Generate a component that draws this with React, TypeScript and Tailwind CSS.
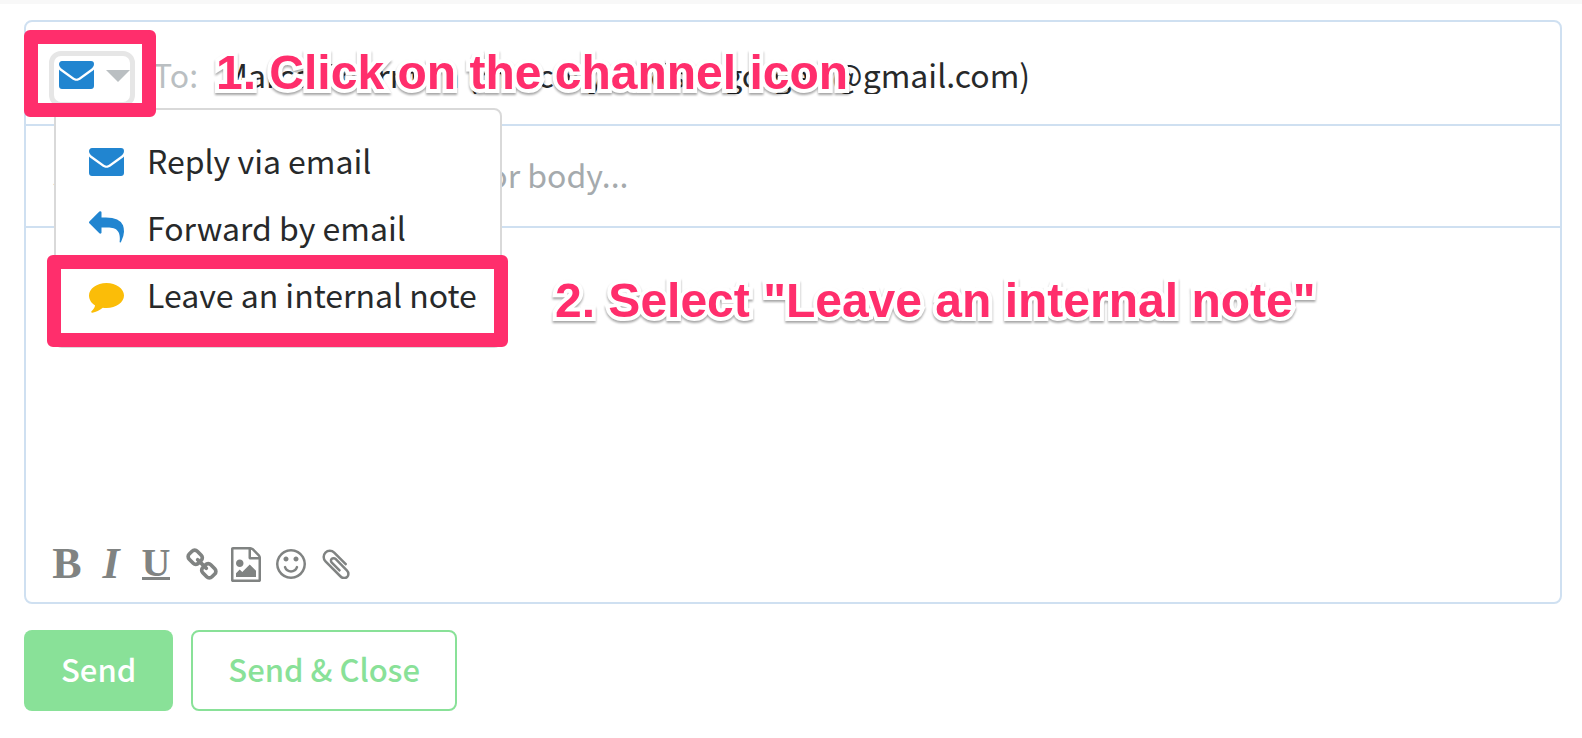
import type { ReactNode } from "react";

const sans = "font-['Noto_Sans_CJK_SC','Open_Sans',sans-serif]";

function MailIcon() {
  return (
    <svg viewBox="0 -4 35 32" className="h-8 w-[35px] shrink-0" fill="#2185d0" aria-hidden="true">
      <path d="M3 0h29c2 0 3 1.300 3 3 0 2-1.200 3.800-3 5L21 16c-1.500 1.100-2.500 1.700-3.500 1.700S15.500 17.100 14 16L3 8C1.300 6.800 0 5 0 3.300 0 1.400 1.200 0 3 0z" />
      <path d="M0 8.500c.6.6 1.200 1.200 2 1.700l10.500 7.500c1.900 1.400 3.400 2.100 5 2.100s3.100-.7 5-2.100L33 10.200c.8-.5 1.400-1.100 2-1.700V25c0 1.700-1.300 3-3 3H3c-1.700 0-3-1.300-3-3z" />
    </svg>
  );
}

function ReplyIcon() {
  return (
    <svg viewBox="0 -100 1792 1764" className="h-[35px] w-[35px] shrink-0" fill="#2185d0" aria-hidden="true">
      <path d="M1792 1056q0 166-127 451-3 7-10.500 24t-13.500 30-13 22q-12 17-28 17-15 0-23.500-10t-8.500-25q0-9 2.500-26.500t2.500-23.500q5-68 5-123 0-101-17.500-181t-48.500-138.500-80-101-105.500-69.500-133-42.500-154-21.500-175.500-6h-224v256q0 26-19 45t-45 19-45-19l-512-512q-19-19-19-45t19-45l512-512q19-19 45-19t45 19 19 45v256h224q713 0 875 403 53 134 53 333z" />
    </svg>
  );
}

function NoteIcon() {
  return (
    <svg viewBox="0 -8 35 38" className="h-[38px] w-[35px] shrink-0" fill="#fbbd08" aria-hidden="true">
      <path d="M17.500 0C27.200 0 35 5.600 35 12.500S27.200 25 17.500 25c-1.300 0-2.500-.1-3.700-.3-3.200 2.700-6.900 4.300-10.400 5-.6.100-1.100-.1-1.200-.6-.1-.4.200-.7.600-1.100 1.600-1.600 2.700-2.900 3.300-5.500C2.400 20.200 0 16.600 0 12.500 0 5.600 7.800 0 17.500 0z" />
    </svg>
  );
}

const options: { label: string; icon: ReactNode }[] = [
  { label: "Reply via email", icon: <MailIcon /> },
  { label: "Forward by email", icon: <ReplyIcon /> },
  { label: "Leave an internal note", icon: <NoteIcon /> },
];

const callout =
  "pointer-events-none absolute whitespace-nowrap font-['Liberation_Sans',Arial,sans-serif] text-[48px] leading-[56px] font-bold text-[#ff2e6c] [-webkit-text-stroke:8px_white] [paint-order:stroke_fill] drop-shadow-[0_2px_1px_rgba(0,0,0,0.35)]";

const tool = "flex h-9 items-center justify-center text-[#808382]";

function Toolbar() {
  return (
    <div className="flex items-center px-[26px] pb-5 font-['Liberation_Serif',serif]">
      <button type="button" aria-label="Bold" className={`${tool} w-[30px] text-[44px] leading-none font-bold`}>B</button>
      <button type="button" aria-label="Italic" className={`${tool} ml-[14px] w-[30px] text-[44px] leading-none font-bold italic`}>I</button>
      <button type="button" aria-label="Underline" className={`${tool} ml-[14px] w-[32px]`}>
        <span className="border-b-[3px] border-[#808382] text-[40px] leading-[29px] font-bold">U</span>
      </button>
      <button type="button" aria-label="Insert link" className={`${tool} ml-[14px] w-8`}>
        <svg viewBox="0 0 1664 1664" className="h-8 w-8" fill="currentColor" aria-hidden="true">
          <path d="M1456 1216q0-40-28-68l-208-208q-28-28-68-28-42 0-72 32 3 3 19 18.500t21.500 21.500 15 19 13 25.500 3.500 27.500q0 40-28 68t-68 28q-15 0-27.500-3.500t-25.500-13-19-15-21.500-21.500-18.500-19q-33 31-33 73 0 40 28 68l206 207q27 27 68 27 40 0 68-26l147-146q28-28 28-67zm-703-705q0-40-28-68l-206-207q-28-28-68-28-39 0-68 27l-147 146q-28 28-28 67 0 40 28 68l208 208q27 27 68 27 42 0 72-31-3-3-19-18.500t-21.500-21.500-15-19-13-25.500-3.500-27.500q0-40 28-68t68-28q15 0 27.500 3.500t25.500 13 19 15 21.500 21.500 18.500 19q33-31 33-73zm895 705q0 120-85 203l-147 146q-83 83-203 83-121 0-204-85l-206-207q-83-83-83-203 0-123 88-209l-88-88q-86 88-208 88-120 0-204-84l-208-208q-84-84-84-204t85-203l147-146q83-83 203-83 121 0 204 85l206 207q83 83 83 203 0 123-88 209l88 88q86-88 208-88 120 0 204 84l208 208q84 84 84 204z" />
        </svg>
      </button>
      <button type="button" aria-label="Insert image" className={`${tool} ml-[13px] w-[30px]`}>
        <svg viewBox="0 0 1536 1792" className="h-[35px] w-[30px]" fill="currentColor" aria-hidden="true">
          <path d="M1468 380q28 28 48 76t20 88v1152q0 40-28 68t-68 28H96q-40 0-68-28t-28-68V96q0-40 28-68T96 0h896q40 0 88 20t76 48zm-444-244v376h376q-10-29-22-41l-313-313q-12-12-41-22zm384 1528V640H992q-40 0-68-28t-28-68V128H128v1536h1280zm-128-448v320H256v-192l192-192 128 128 384-384zM448 1024q-80 0-136-56t-56-136 56-136 136-56 136 56 56 136-56 136-136 56z" />
        </svg>
      </button>
      <button type="button" aria-label="Insert emoji" className={`${tool} ml-[15px] w-[30px]`}>
        <svg viewBox="0 0 1536 1536" className="h-[30px] w-[30px]" fill="currentColor" aria-hidden="true">
          <path d="M1134 947q-37 121-138 195t-228 74-228-74-138-195q-8-25 4-48.500t38-31.500q25-8 48.500 4t31.500 38q25 80 92.500 129.500t151.500 49.500 151.500-49.500 92.500-129.500q8-26 32-38t49-4 37 31.500 4 48.500zM640 512q0 53-37.500 90.500T512 640t-90.500-37.500T384 512t37.500-90.500T512 384t90.500 37.500T640 512zm512 0q0 53-37.500 90.500T1024 640t-90.500-37.500T896 512t37.500-90.500T1024 384t90.500 37.500T1152 512zm256 256q0-130-51-248.500t-136.500-204-204-136.500T768 128t-248.500 51-204 136.500-136.500 204T128 768t51 248.500 136.500 204 204 136.500 248.500 51 248.500-51 204-136.500 136.500-204 51-248.500zm128 0q0 209-103 385.500T1153.500 1433 768 1536t-385.500-103T103 1153.500 0 768t103-385.500T382.500 103 768 0t385.500 103T1433 382.500 1536 768z" />
        </svg>
      </button>
      <button type="button" aria-label="Attach file" className={`${tool} ml-4 w-[28px]`}>
        <svg viewBox="0 0 1404 1544" className="h-[30px] w-[28px]" fill="currentColor" aria-hidden="true">
          <path d="M1404 1287q0 117-79 196t-196 79q-135 0-235-100L117 686Q4 571 4 413q0-159 110-270T383 32q158 0 273 113l605 606q10 10 10 22 0 16-30.500 46.500T1194 850q-13 0-23-10L565 233q-79-77-181-77-106 0-179 75t-73 181q0 105 76 181l776 777q63 63 145 63 64 0 106-42t42-106q0-82-63-145L633 559q-26-24-60-24-29 0-48 19t-19 48q0 32 25 59l410 410q10 10 10 22 0 16-31 47t-47 31q-12 0-22-10L441 751q-63-61-63-149 0-82 57-139t139-57q88 0 149 63l581 581q100 98 100 237z" />
        </svg>
      </button>
    </div>
  );
}

export default function App() {
  return (
    <main className={`min-h-screen border-t-4 border-[#f8f8f8] bg-white px-6 pt-4 text-[32px] leading-10 text-[#27292a] ${sans}`}>
      <form className="relative mr-[-4px]" onSubmit={(e) => e.preventDefault()}>
        <section className="rounded-lg border-2 border-[#cfe0f1]">
          <div className="relative flex h-[104px] items-center border-b-2 border-[#cfe0f1] pl-[23px]">
            <button
              type="button"
              aria-label="Channel"
              className="mt-3 flex h-14 w-[86px] items-start gap-3 rounded-xl border-[5px] border-[#e6e6e6] pt-px pl-[5px]"
            >
              <MailIcon />
              <svg viewBox="0 0 24 12" className="mt-[13px] h-3 w-6 shrink-0" fill="#babfc2" aria-hidden="true">
                <path d="M0 0h24L12 12z" />
              </svg>
            </button>
            <label htmlFor="to" className="ml-[18px] pt-0.5 text-[#babfc2]">To:</label>
            <input
              id="to"
              className="ml-6 min-w-0 flex-1 pt-0.5 outline-none"
              defaultValue="Marca Thornton (marcosy.hudsongorgeis@gmail.com)"
            />
            <ul className="absolute top-[86px] left-[28px] z-10 h-[240px] w-[448px] rounded-lg border-2 border-[#d9d9d9] bg-white pt-4">
              {options.map((option) => (
                <li key={option.label} className="h-[67px]">
                  <button type="button" className="flex h-full w-full items-center pl-[33px]">
                    {option.icon}
                    <span className="ml-[23px] whitespace-nowrap">{option.label}</span>
                  </button>
                </li>
              ))}
            </ul>
          </div>
          <input
            aria-label="Saved reply"
            className="block h-[102px] w-full border-b-2 border-[#cfe0f1] px-[26px] pb-1 outline-none placeholder:text-[#a5aaad]"
            placeholder="Search saved replies by titles or body..."
          />
          <textarea aria-label="Message" className="block h-[318px] w-full resize-none px-7 py-4 outline-none" />
          <Toolbar />
        </section>

        <div className="pointer-events-none absolute top-[10px] left-0 z-20 h-[87px] w-[132px] rounded-md border-[14px] border-[#ff2e6c]" />
        <div className="pointer-events-none absolute top-[235px] left-[23px] z-20 h-[92px] w-[461px] rounded-md border-[14px] border-[#ff2e6c]" />
        <p className={`${callout} top-[25px] left-[192px] z-20`}>1. Click on the channel icon</p>
        <p className={`${callout} top-[253px] left-[531px] z-20`}>2. Select "Leave an internal note"</p>
      </form>

      <div className="mt-[26px] flex gap-[18px] text-[31px] font-medium">
        <button type="button" className="h-[81px] rounded-lg bg-[#89e198] px-[37px] pb-1 text-white">Send</button>
        <button type="button" className="h-[81px] rounded-lg border-2 border-[#89e198] px-[35px] pb-1 text-[#89e198]">Send &amp; Close</button>
      </div>
    </main>
  );
}
